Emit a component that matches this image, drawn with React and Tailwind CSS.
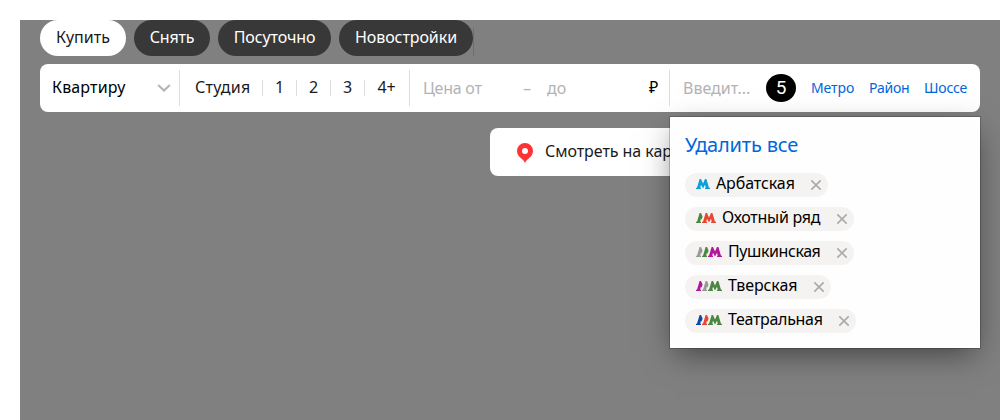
const M_PATH =
  'M0 10V8.7H1L3.6 0H5L7 4.4 9 0H10.400L13 8.7H14V10H9V8.7H9.800L9 5.800 7 9.600 5 5.800 4.200 8.7H5V10Z';
const SLIVER_PATH = 'M0 10V8.7H1L3.6 0H5L6.600 3.400 5.600 6.400 4.800 6 4.200 8.7H5V10H0Z';

const tabs = [
  { label: 'Купить', cls: 'w-[86px] bg-white text-[#1a1a1a]' },
  { label: 'Снять', cls: 'w-[76px] bg-[#383838] text-white tracking-[-0.2px]' },
  { label: 'Посуточно', cls: 'w-[113px] bg-[#383838] text-white tracking-[-0.1px]' },
  { label: 'Новостройки', cls: 'w-[134px] bg-[#383838] text-white tracking-[-0.08px]' },
];

const stations = [
  { name: 'Арбатская', colors: ['#0d9fd8'], cls: 'w-[143px] tracking-[-0.1px]' },
  { name: 'Охотный ряд', colors: ['#4b8742', '#e94434'], cls: 'w-[169px] tracking-[-0.27px]' },
  { name: 'Пушкинская', colors: ['#999999', '#4b8742', '#b1179a'], cls: 'w-[169px] tracking-[-0.42px]' },
  { name: 'Тверская', colors: ['#b1179a', '#999999', '#4b8742'], cls: 'w-[146px] tracking-[-0.1px]' },
  { name: 'Театральная', colors: ['#0a47a8', '#e94434', '#4b8742'], cls: 'w-[171px] tracking-[-0.3px]' },
];

function MetroIcon({ colors }) {
  const last = colors.length - 1;
  const width = 14 + last * 6;
  return (
    <svg width={width} height="10" viewBox={`0 0 ${width} 10`} className="-mt-0.5 shrink-0">
      {colors.map((color, i) => (
        <path
          key={i}
          d={i === last ? M_PATH : SLIVER_PATH}
          fill={color}
          transform={`translate(${i * 6} 0)`}
        />
      ))}
    </svg>
  );
}

function Divider() {
  return <span className="h-4 w-px shrink-0 bg-[#dddddd]" />;
}

function Popup() {
  return (
    <div className="absolute top-[53px] right-0 h-[231px] w-[310px] bg-[#fefefe] px-[15px] pt-3 shadow-[0_0_0_1px_rgba(0,0,0,0.2),0_10px_30px_-5px_rgba(0,0,0,0.5)]">
      <div className="h-8 text-[20px] leading-8 tracking-[-0.18px] whitespace-nowrap text-[#0066dd]">Удалить все</div>
      <div className="mt-3 flex flex-col gap-[10px]">
        {stations.map((s) => (
          <div key={s.name} className={`flex h-6 items-center rounded-full bg-[#f4f3f1] pr-[7px] pl-[11px] ${s.cls}`}>
            <MetroIcon colors={s.colors} />
            <span className="ml-1.5 h-6 text-[16px] leading-[21px] whitespace-nowrap text-black">{s.name}</span>
            <svg className="ml-auto shrink-0" width="10" height="10" viewBox="0 0 10 10">
              <path d="M.3.3 9.7 9.7M9.7.3.3 9.7" stroke="#aaaaaa" strokeWidth="1.6" />
            </svg>
          </div>
        ))}
      </div>
    </div>
  );
}

export default function App() {
  return (
    <div className="h-[420px] w-[1000px] overflow-hidden bg-white pt-5 pl-5 font-['Noto_Sans',sans-serif] text-[16px] text-[#1a1a1a]">
      <div className="h-[400px] bg-[#808080] pr-5 pl-5">
        <div className="flex h-9 gap-2">
          {tabs.map((t) => (
            <button key={t.label} className={`h-9 rounded-full pb-0.5 text-center leading-[34px] whitespace-nowrap ${t.cls}`}>
              {t.label}
            </button>
          ))}
          <span className="-ml-2 h-7 w-px self-end bg-[#6e6e6e]" />
        </div>

        <div className="relative z-10 mt-2 flex h-12 items-center rounded-lg bg-white">
          <div className="flex h-9 w-[140px] items-center justify-between border-r border-[#dddddd] pr-2 pl-3">
            <span className="pb-0.5 tracking-[0.15px] text-black">Квартиру</span>
            <svg width="14" height="8" viewBox="0 0 14 8" fill="none">
              <path d="M1.2 1 7 6.5 12.8 1" stroke="#b3b3b3" strokeWidth="2" />
            </svg>
          </div>
          <div className="flex h-9 w-[230px] items-center border-r border-[#dddddd]">
            <span className="w-[82px] pb-0.5 pl-[15px] tracking-[0.25px]">Студия</span>
            <Divider />
            <span className="w-[33px] pb-0.5 text-center">1</span>
            <Divider />
            <span className="w-[33px] pb-0.5 text-center">2</span>
            <Divider />
            <span className="w-[33px] pb-0.5 text-center">3</span>
            <Divider />
            <span className="w-[43px] pb-0.5 text-center tracking-[-0.2px]">4+</span>
          </div>
          <div className="flex h-9 w-[260px] items-center border-r border-[#dddddd] pl-[13px] text-[#b3b3b3]">
            <span className="w-[100px] tracking-[-0.25px]">Цена от</span>
            <span className="w-6">–</span>
            <span className="w-[102px]">до</span>
            <span className="pb-0.5 text-black">₽</span>
          </div>
          <div className="flex h-9 flex-1 items-center pl-[13px]">
            <span className="w-[83px] whitespace-nowrap text-[#b3b3b3]">Введит...</span>
            <span className="h-7 w-[30px] rounded-[50%] bg-black text-center font-[Roboto,sans-serif] text-[19px] leading-[27px] text-white">5</span>
            <span className="ml-[15px] w-[58px] pb-px text-[14px] tracking-[-0.1px] text-[#0066dd]">Метро</span>
            <span className="w-[55px] pb-px text-[14px] tracking-[-0.2px] text-[#0066dd]">Район</span>
            <span className="pb-px text-[14px] tracking-[-0.2px] text-[#0066dd]">Шоссе</span>
          </div>
          <Popup />
        </div>

        <div className="mt-4 ml-[450px] flex h-12 w-[260px] items-center rounded-lg bg-white pl-[27px]">
          <svg width="16" height="20" viewBox="0 0 16 20" className="mt-0.5">
            <path d="M8 0a8 8 0 0 1 8 8c0 3-1.6 5.3-4.1 7.3C10.300 16.600 9 18 8 20 7 18 5.700 16.600 4.100 15.300 1.600 13.300 0 11 0 8a8 8 0 0 1 8-8Z" fill="#ff3333" />
            <circle cx="8" cy="8" r="3" fill="#fff" />
          </svg>
          <span className="ml-3 pb-0.5 tracking-[-0.05px] whitespace-nowrap">Смотреть на карте</span>
        </div>
      </div>
    </div>
  );
}
